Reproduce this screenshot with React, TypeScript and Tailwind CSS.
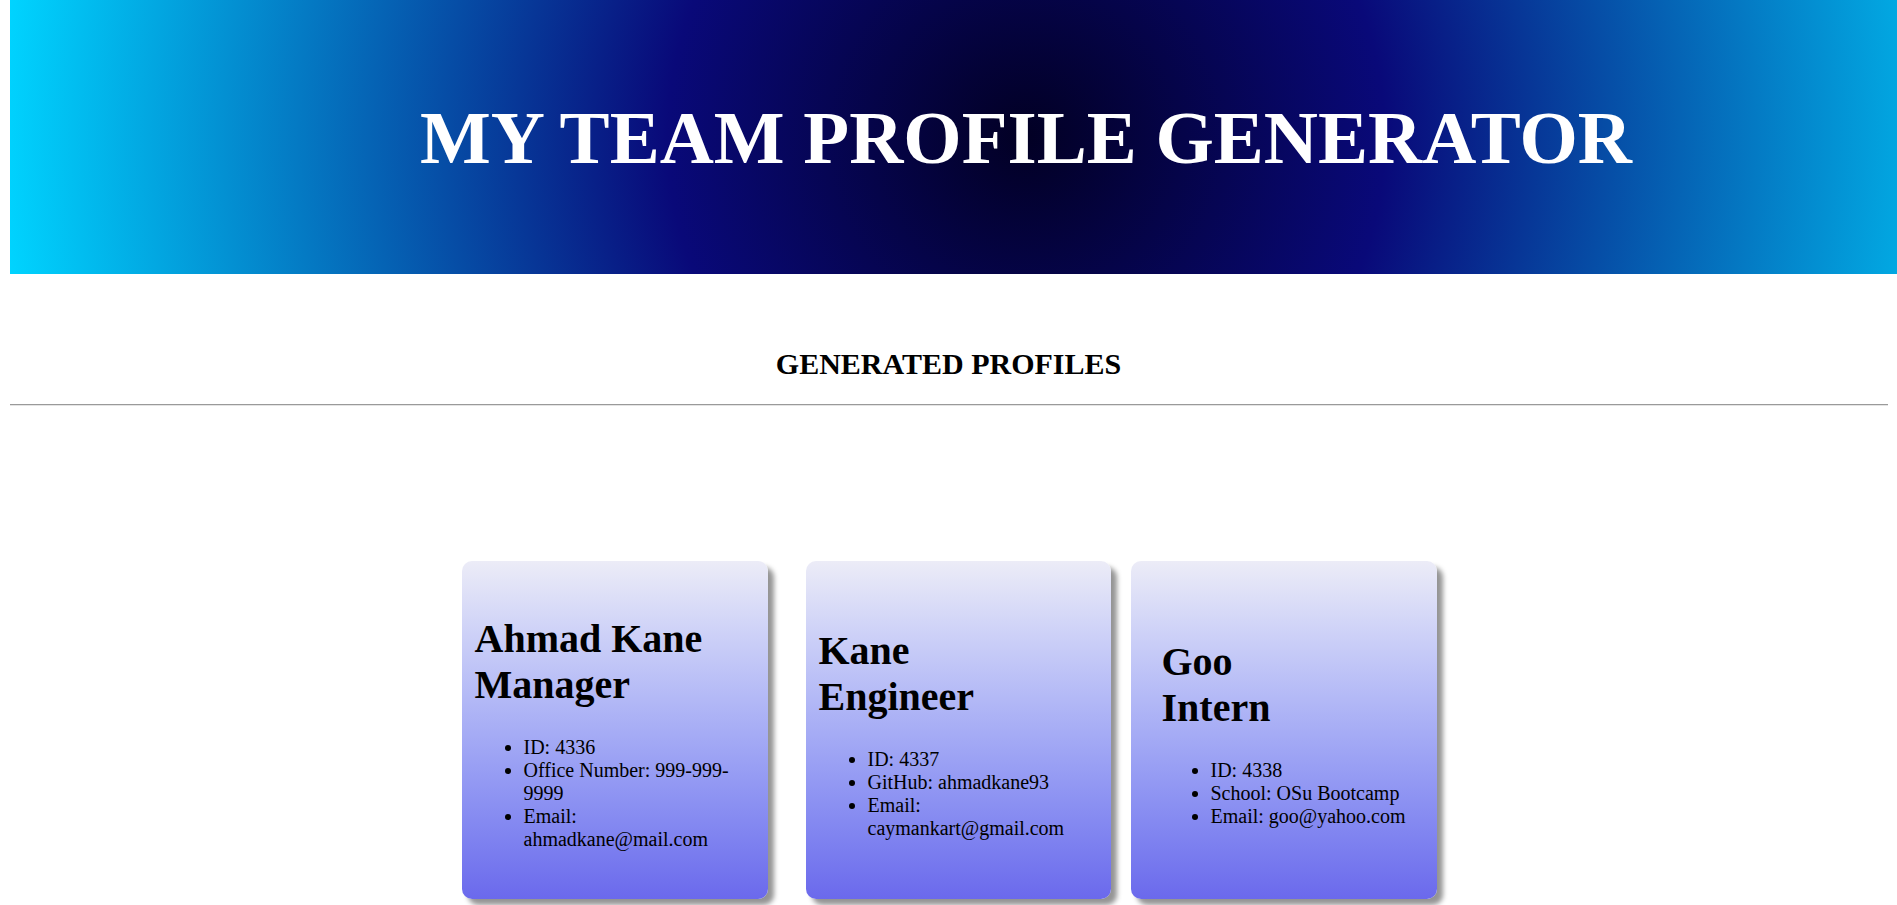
const serif = "font-['Liberation_Serif','Times_New_Roman',serif]"

type Member = {
  name: string
  role: string
  details: string[]
  width: string
  pad: string
  gap: string
}

const team: Member[] = [
  {
    name: 'Ahmad Kane',
    role: 'Manager',
    details: ['ID: 4336', 'Office Number: 999-999-9999', 'Email: ahmadkane@mail.com'],
    width: 'w-[306px]',
    pad: 'px-[13px]',
    gap: 'mr-[38px]',
  },
  {
    name: 'Kane',
    role: 'Engineer',
    details: ['ID: 4337', 'GitHub: ahmadkane93', 'Email: caymankart@gmail.com'],
    width: 'w-[305px]',
    pad: 'px-[13px]',
    gap: 'mr-[20px]',
  },
  {
    name: 'Goo',
    role: 'Intern',
    details: ['ID: 4338', 'School: OSu Bootcamp', 'Email: goo@yahoo.com'],
    width: 'w-[306px]',
    pad: 'pl-[31px] pr-[13px]',
    gap: '',
  },
]

function ProfileCard({ member }: { member: Member }) {
  return (
    <div
      className={`${member.width} ${member.pad} ${member.gap} h-[338px] shrink-0 rounded-[10px] bg-gradient-to-b from-[#ececf7] to-[#6b69ec] shadow-[6px_6px_5px_rgba(0,0,0,0.42)] flex flex-col justify-center pt-[7px]`}
    >
      <h1 className="text-[40px] leading-[46px] font-bold text-black">
        <span className="block">{member.name}</span>
        <span className="block">{member.role}</span>
      </h1>
      <ul className="mt-[28px] pl-[49px] list-disc text-[20px] leading-[23px] text-black">
        {member.details.map((d) => (
          <li key={d}>{d}</li>
        ))}
      </ul>
    </div>
  )
}

export default function App() {
  return (
    <div className={`${serif} min-h-[905px] bg-white overflow-hidden`}>
      {/* banner */}
      <header className="ml-[10px] h-[274px] pl-[145px] flex items-center justify-center bg-[radial-gradient(circle_farthest-corner_at_1016px_50%,rgba(2,0,36,1)_0%,rgba(9,9,121,1)_35%,rgba(0,212,255,1)_100%)]">
        <h1 className="text-[75px] leading-none font-bold text-white whitespace-nowrap">
          MY TEAM PROFILE GENERATOR
        </h1>
      </header>

      {/* section title */}
      <h2 className="mt-[72px] text-center text-[30px] leading-[35px] font-bold text-black">
        GENERATED PROFILES
      </h2>
      <div className="mt-[23px] ml-[10px] mr-[9px] border-t border-t-[#9a9a9a] border-b border-b-[#e4e4e4]" />

      {/* cards */}
      <div className="mt-[155px] flex justify-center pl-[1px]">
        {team.map((m) => (
          <ProfileCard key={m.name} member={m} />
        ))}
      </div>
    </div>
  )
}
